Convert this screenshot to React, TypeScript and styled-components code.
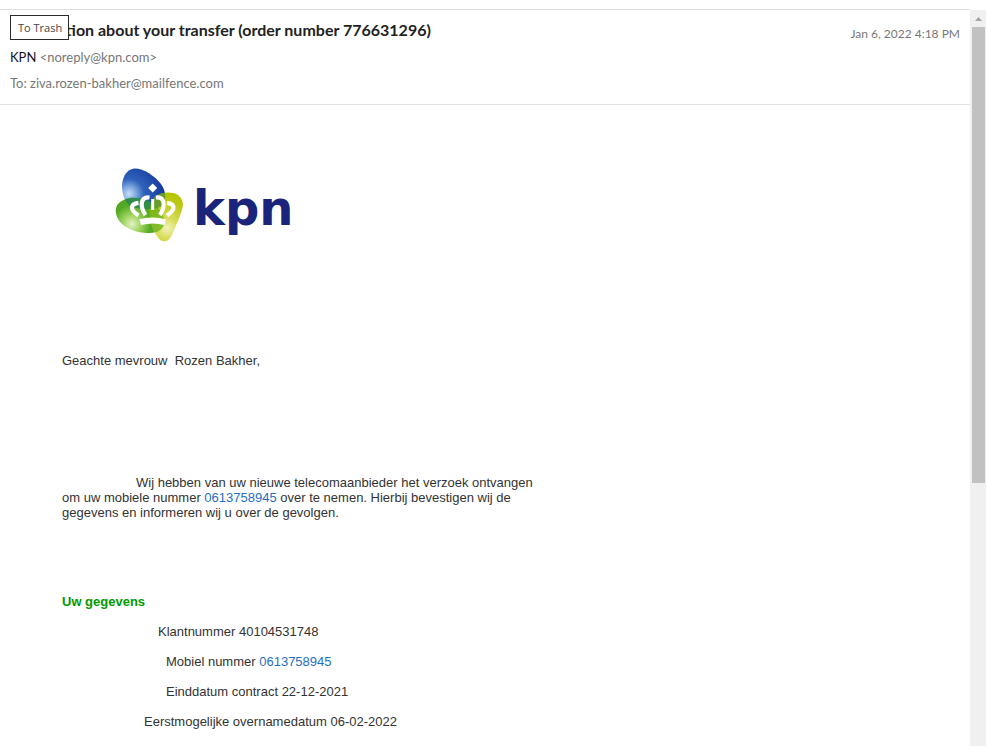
import React from "react";
import styled, { createGlobalStyle } from "styled-components";

const GlobalStyle = createGlobalStyle`
  * { box-sizing: border-box; }
  body { margin: 0; background: #fff; overflow: hidden; }
`;

const Page = styled.div`
  height: 100vh;
  padding-top: 9px;
  display: flex;
  overflow: hidden;
`;

const Message = styled.main`
  flex: 1;
  min-width: 0;
  overflow: hidden;
  border-top: 1px solid #dddfe2;
`;

const Header = styled.header`
  position: relative;
  display: flex;
  justify-content: space-between;
  align-items: flex-start;
  padding: 8px 10px;
  border-bottom: 1px solid #e0e2e5;
  font-family: Lato, sans-serif;
  font-size: 13px;
  line-height: 26px;
  color: #777;
`;

const Subject = styled.h1`
  margin: 0 0 2px;
  font-size: 16px;
  line-height: 24px;
  font-weight: 700;
  color: #222;
`;

const AddressLine = styled.div`
  line-height: 26px;
`;

const Sender = styled.span`
  color: #112;
`;

const SentDate = styled.time`
  padding-top: 3px;
  font-size: 12px;
  white-space: nowrap;
`;

const Tooltip = styled.div`
  position: absolute;
  left: 10px;
  top: 5px;
  padding: 0 6px 0 7px;
  border: 1px solid #2b2b2b;
  background: #fff;
  color: #444;
  font: 11px/23px "Open Sans", sans-serif;
`;

const Body = styled.article`
  max-width: 560px;
  padding: 63px 10px 0 62px;
  font: 13px/15px "Liberation Sans", Arial, sans-serif;
  color: #333;
`;

const Logo = styled.svg`
  display: block;
  width: 184px;
  height: 80px;
  margin-left: 50px;
`;

const Greeting = styled.p`
  margin: 105px 0 0;
  white-space: pre-wrap;
`;

const Paragraph = styled.p`
  margin: 107px 0 0;
  text-indent: 74px;
`;

const SectionTitle = styled.h2`
  margin: 74px 0 15px;
  font-size: 13px;
  line-height: 15px;
  color: #090;
`;

const Details = styled.div`
  display: grid;
  gap: 15px;
`;

const Detail = styled.div<{ $indent: number }>`
  padding-left: ${(p) => p.$indent}px;
`;

const PhoneLink = styled.a`
  color: #1f70c1;
  text-decoration: none;
`;

const Scrollbar = styled.div`
  flex: none;
  width: 16px;
  margin-top: 1px;
  padding: 0 1px 0 2px;
  background: #f0f0f0;
`;

const ScrollArrow = styled.svg`
  display: block;
  width: 13px;
  height: 17px;
`;

const ScrollThumb = styled.div`
  height: 62%;
  background: #c1c1c1;
`;

const KpnLogo = () => (
  <Logo viewBox="0 0 184 80" role="img" aria-label="kpn">
    <defs>
      <radialGradient id="blue" gradientUnits="userSpaceOnUse" cx="17" cy="26" r="36">
        <stop offset="0" stopColor="#c9e0f6" />
        <stop offset="0.18" stopColor="#84aee2" />
        <stop offset="0.42" stopColor="#2f62ba" />
        <stop offset="1" stopColor="#15389a" />
      </radialGradient>
      <radialGradient id="green" gradientUnits="userSpaceOnUse" cx="20" cy="56" r="34">
        <stop offset="0" stopColor="#e3f3c8" />
        <stop offset="0.25" stopColor="#a5d666" />
        <stop offset="0.55" stopColor="#55ab24" />
        <stop offset="1" stopColor="#45a01f" />
      </radialGradient>
      <radialGradient id="yellow" gradientUnits="userSpaceOnUse" cx="55" cy="60" r="34">
        <stop offset="0" stopColor="#f4f2bd" />
        <stop offset="0.3" stopColor="#d9dc5c" />
        <stop offset="0.7" stopColor="#bfcb1c" />
        <stop offset="1" stopColor="#b4c400" />
      </radialGradient>
      <path
        id="blueShape"
        d="M22 .5C31 0 43 8 49 16C54 23 55 32 50 38C44 42 24 42 17 37C12 32 10 25 10 17C11 7 15 2 22 .5Z"
      />
      <path
        id="greenShape"
        d="M14 31C22 28 35 31 43 37C50 43 54 51 52 57C49 64 43 65 35 65C26 65 15 61 9 55C3 49 2 39 7 35C9 33 11 32 14 31Z"
      />
      <clipPath id="inBlue">
        <use href="#blueShape" />
      </clipPath>
      <clipPath id="inGreen">
        <use href="#greenShape" />
      </clipPath>
      <path
        id="yellowShape"
        d="M44 28C50 24 56 24 61 25C67 26 71 31 71 37C70 46 63 59 60 67C57 73 53 75 48 72C43 67 38 56 38 48C37 39 39 32 44 28Z"
      />
    </defs>
    <use href="#blueShape" fill="url(#blue)" />
    <use href="#greenShape" fill="url(#green)" />
    <use href="#yellowShape" fill="url(#yellow)" />
    <g clipPath="url(#inBlue)">
      <use href="#greenShape" fill="#26845a" fillOpacity="0.75" />
      <use href="#yellowShape" fill="#4f8d35" fillOpacity="0.75" />
    </g>
    <g clipPath="url(#inGreen)">
      <use href="#yellowShape" fill="#5fae12" fillOpacity="0.7" />
    </g>
    <g fill="#fff">
      <path d="M40.700 15.500L45.200 20L40.700 24.500L36.200 20Z" />
      <path d="M27.300 51.300Q40.700 47.500 54 51.300L52.500 57Q40.700 54 29 57Z" />
    </g>
    <g fill="none" stroke="#fff" strokeWidth="4.2">
      <path d="M26.500 34.800C17.500 36 18 42 26.500 47.500" />
      <path d="M37.500 29.500C28.500 28.500 27.500 38 33.500 47" />
      <path d="M43.900 29.500C52.900 28.500 53.900 38 47.900 47" />
      <path d="M54.900 34.800C63.900 36 63.400 42 54.900 47.500" />
      <path d="M40.700 31V42" strokeWidth="3" />
    </g>
    <text x="81" y="57" fill="#1a247b" fontFamily="DejaVu Sans, sans-serif" fontSize="48" fontWeight="700">
      kpn
    </text>
  </Logo>
);

const phone = "0613758945";

const details: { label: string; value: React.ReactNode; indent: number }[] = [
  { label: "Klantnummer", value: "40104531748", indent: 96 },
  { label: "Mobiel nummer", value: <PhoneLink href={`tel:${phone}`}>{phone}</PhoneLink>, indent: 104 },
  { label: "Einddatum contract", value: "22-12-2021", indent: 104 },
  { label: "Eerstmogelijke overnamedatum", value: "06-02-2022", indent: 82 },
];

export default function App() {
  return (
    <>
      <GlobalStyle />
      <Page>
        <Message>
          <Header>
            <div>
              <Subject>Information about your transfer (order number 776631296)</Subject>
              <AddressLine>
                <Sender>KPN</Sender> &lt;noreply@kpn.com&gt;
              </AddressLine>
              <AddressLine>To: ziva.rozen-bakher@mailfence.com</AddressLine>
            </div>
            <SentDate>Jan 6, 2022 4:18 PM</SentDate>
            <Tooltip role="tooltip">To Trash</Tooltip>
          </Header>
          <Body>
            <KpnLogo />
            <Greeting>{"Geachte mevrouw  Rozen Bakher,"}</Greeting>
            <Paragraph>
              Wij hebben van uw nieuwe telecomaanbieder het verzoek ontvangen om uw mobiele nummer{" "}
              <PhoneLink href={`tel:${phone}`}>{phone}</PhoneLink> over te nemen. Hierbij bevestigen wij de
              gegevens en informeren wij u over de gevolgen.
            </Paragraph>
            <SectionTitle>Uw gegevens</SectionTitle>
            <Details>
              {details.map((d) => (
                <Detail key={d.label} $indent={d.indent}>
                  {d.label} {d.value}
                </Detail>
              ))}
            </Details>
          </Body>
        </Message>
        <Scrollbar aria-hidden="true">
          <ScrollArrow viewBox="0 0 13 17">
            <path d="M3 11L6.500 7L10 11Z" fill="#a3a3a3" />
          </ScrollArrow>
          <ScrollThumb />
        </Scrollbar>
      </Page>
    </>
  );
}
